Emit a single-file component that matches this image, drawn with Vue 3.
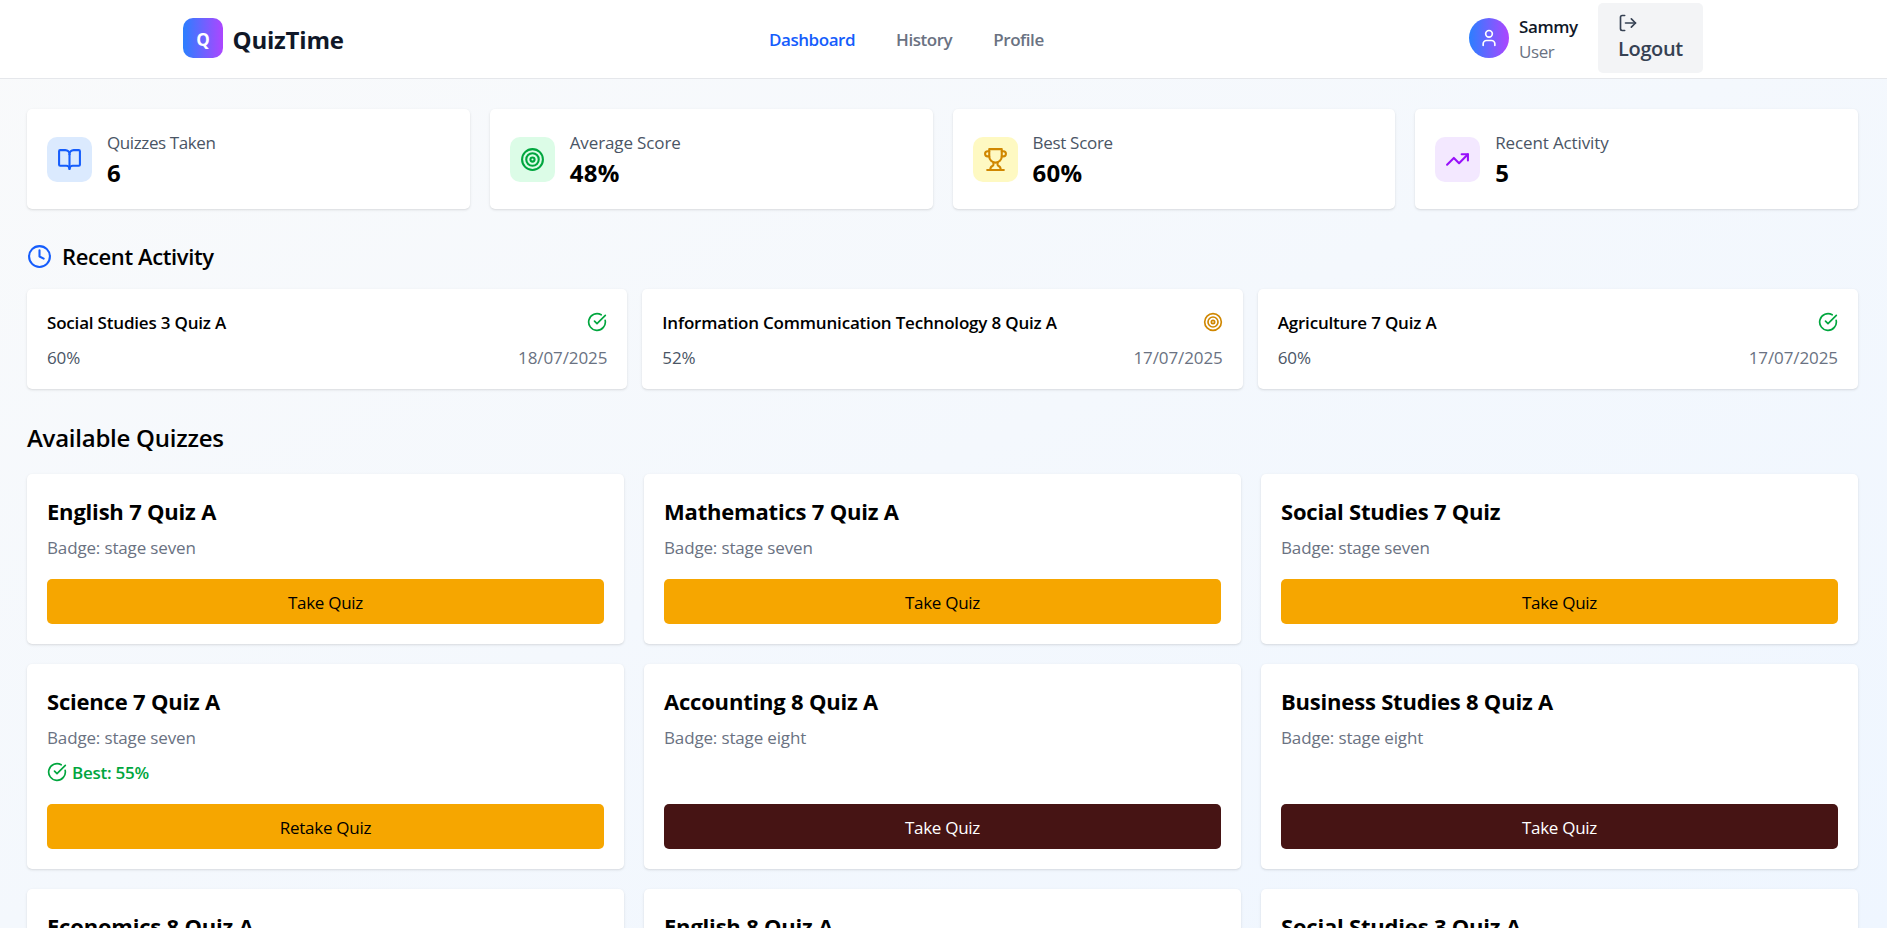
<script setup>
const icons = {
  book: ['M12 7v14', 'M3 18a1 1 0 0 1-1-1V4a1 1 0 0 1 1-1h5a4 4 0 0 1 4 4 4 4 0 0 1 4-4h5a1 1 0 0 1 1 1v13a1 1 0 0 1-1 1h-6a3 3 0 0 0-3 3 3 3 0 0 0-3-3z'],
  target: ['M2 12a10 10 0 1 0 20 0a10 10 0 1 0-20 0', 'M6 12a6 6 0 1 0 12 0a6 6 0 1 0-12 0', 'M10 12a2 2 0 1 0 4 0a2 2 0 1 0-4 0'],
  trophy: ['M6 9H4.5a2.5 2.5 0 0 1 0-5H6', 'M18 9h1.5a2.5 2.5 0 0 0 0-5H18', 'M4 22h16', 'M10 14.66V17c0 .55-.47.98-.97 1.21C7.85 18.75 7 20.24 7 22', 'M14 14.66V17c0 .55.47.98.97 1.21C16.15 18.75 17 20.24 17 22', 'M18 2H6v7a6 6 0 0 0 12 0V2Z'],
  trend: ['M22 7 13.5 15.5 8.5 10.5 2 17', 'M16 7h6v6'],
  check: ['M21.801 10A10 10 0 1 1 17 3.335', 'm9 11 3 3L22 4'],
}
const stats = [
  { label: 'Quizzes Taken', value: '6', icon: 'book', tone: 'blue' },
  { label: 'Average Score', value: '48%', icon: 'target', tone: 'green' },
  { label: 'Best Score', value: '60%', icon: 'trophy', tone: 'yellow' },
  { label: 'Recent Activity', value: '5', icon: 'trend', tone: 'purple' },
]
const recent = [
  { title: 'Social Studies 3 Quiz A', score: '60%', date: '18/07/2025', icon: 'check', tone: 'pass' },
  { title: 'Information Communication Technology 8 Quiz A', score: '52%', date: '17/07/2025', icon: 'target', tone: 'fair' },
  { title: 'Agriculture 7 Quiz A', score: '60%', date: '17/07/2025', icon: 'check', tone: 'pass' },
]
const quizzes = [
  { title: 'English 7 Quiz A', stage: 'seven' },
  { title: 'Mathematics 7 Quiz A', stage: 'seven' },
  { title: 'Social Studies 7 Quiz', stage: 'seven' },
  { title: 'Science 7 Quiz A', stage: 'seven', best: '55%' },
  { title: 'Accounting 8 Quiz A', stage: 'eight' },
  { title: 'Business Studies 8 Quiz A', stage: 'eight' },
  { title: 'Economics 8 Quiz A', stage: 'eight' },
  { title: 'English 8 Quiz A', stage: 'eight' },
  { title: 'Social Studies 3 Quiz A', stage: 'three' },
]
</script>

<template>
  <div class="page">
    <header class="header">
      <div class="brand">
        <span class="mark">Q</span>
        <span class="name">QuizTime</span>
      </div>
      <nav class="nav">
        <a class="active">Dashboard</a>
        <a>History</a>
        <a>Profile</a>
      </nav>
      <div class="account">
        <span class="avatar">
          <svg class="icon" viewBox="0 0 24 24"><path d="M19 21v-2a4 4 0 0 0-4-4H9a4 4 0 0 0-4 4v2" /><circle cx="12" cy="7" r="4" /></svg>
        </span>
        <div class="who">
          <span class="user">Sammy</span>
          <span class="role">User</span>
        </div>
        <button class="logout">
          <svg class="icon" viewBox="0 0 24 24"><path d="M8 3H5a2 2 0 0 0-2 2v14a2 2 0 0 0 2 2h3" /><path d="m16 17 5-5-5-5" /><path d="M21 12H9" /></svg>
          <span>Logout</span>
        </button>
      </div>
    </header>

    <main class="main">
      <section class="stats">
        <article v-for="s in stats" :key="s.label" class="card stat">
          <span class="tile" :class="s.tone">
            <svg class="icon" viewBox="0 0 24 24"><path v-for="d in icons[s.icon]" :key="d" :d="d" /></svg>
          </span>
          <div>
            <p class="label">{{ s.label }}</p>
            <p class="value">{{ s.value }}</p>
          </div>
        </article>
      </section>

      <h2 class="heading">
        <svg class="icon" viewBox="0 0 24 24"><circle cx="12" cy="12" r="10" /><path d="M12 6v6l4 2" /></svg>
        <span>Recent Activity</span>
      </h2>
      <section class="recent">
        <article v-for="(r, i) in recent" :key="i" class="card">
          <div class="row">
            <h3 class="recent-title">{{ r.title }}</h3>
            <svg class="icon small" :class="r.tone" viewBox="0 0 24 24"><path v-for="d in icons[r.icon]" :key="d" :d="d" /></svg>
          </div>
          <div class="row meta">
            <span class="score">{{ r.score }}</span>
            <span class="date">{{ r.date }}</span>
          </div>
        </article>
      </section>

      <h2 class="available">Available Quizzes</h2>
      <section class="quizzes">
        <article v-for="(q, i) in quizzes" :key="i" class="card quiz">
          <h3 class="quiz-title">{{ q.title }}</h3>
          <p class="badge">Badge: stage {{ q.stage }}</p>
          <p v-if="q.best" class="best">
            <svg class="icon small" viewBox="0 0 24 24"><path v-for="d in icons.check" :key="d" :d="d" /></svg>
            <span>Best: {{ q.best }}</span>
          </p>
          <button class="take" :class="q.stage">{{ q.best ? 'Retake Quiz' : 'Take Quiz' }}</button>
        </article>
      </section>
    </main>
  </div>
</template>

<style>
body { margin: 0; }
</style>

<style scoped>
.page {
  height: 928px;
  overflow: hidden;
  box-sizing: border-box;
  font-family: "Segoe UI", "Open Sans", "Noto Sans", sans-serif;
  font-size: 17px;
  line-height: 25px;
  color: #000;
  background: linear-gradient(to bottom right, #f9fafb, #eff6ff);
}
p, h2, h3 { margin: 0; font-weight: 400; }
button { border: 0; font: inherit; }
.icon { display: block; flex: none; width: 25px; height: 25px; fill: none; stroke: currentColor; stroke-width: 2; stroke-linecap: round; stroke-linejoin: round; }
.icon.small { width: 20px; height: 20px; }

.header {
  display: grid;
  grid-template-columns: 586px 1fr auto;
  align-items: center;
  box-sizing: border-box;
  height: 79px;
  padding: 0 184px 2px 183px;
  background: #fff;
  border-bottom: 1px solid #e5e7eb;
}
.brand, .nav, .account { display: flex; align-items: center; }
.brand { gap: 9.5px; }
.mark, .avatar { display: flex; align-items: center; justify-content: center; width: 40px; height: 40px; color: #fff; background: linear-gradient(to right, #2b7fff, #ad46ff); }
.mark { border-radius: 10px; font-size: 17px; font-weight: 700; padding-top: 2px; height: 38px; }
.name { font-size: 24px; font-weight: 700; line-height: 35px; color: #101828; padding-top: 3px; letter-spacing: -0.2px; }
.nav { gap: 41px; font-weight: 600; color: #6a7282; padding-top: 2px; letter-spacing: -0.45px; }
.nav .active { color: #155dfc; }
.avatar { border-radius: 50%; }
.avatar .icon { width: 20px; height: 20px; }
.who { display: flex; flex-direction: column; width: 69px; margin: 2px 0 0 10px; letter-spacing: -0.4px; }
.user { font-weight: 600; color: #101828; }
.role { color: #6a7282; }
.logout { display: flex; flex-direction: column; align-items: flex-start; margin-left: 10px; box-sizing: border-box; width: 105px; height: 70px; padding: 10px 20px 0; border-radius: 5px; background: #f3f4f6; color: #364153; font-size: 20px; font-weight: 600; line-height: 32px; letter-spacing: -0.35px; }
.logout .icon { width: 20px; height: 20px; }

.main { padding: 30px 29px 0 27px; }
.card { box-sizing: border-box; padding: 20px; background: #fff; border-radius: 5px; box-shadow: 0 1px 3px rgba(0, 0, 0, .1), 0 1px 2px -1px rgba(0, 0, 0, .1); }
.stats { display: grid; grid-template-columns: repeat(4, 1fr); gap: 20px; }
.stat { display: flex; align-items: center; gap: 15px; height: 100px; }
.tile { padding: 10px; border-radius: 10px; }
.blue { color: #155dfc; background: #dbeafe; }
.green { color: #00a63e; background: #dcfce7; }
.yellow { color: #d08700; background: #fef9c2; }
.purple { color: #9810fa; background: #f3e8ff; }
.label { height: 25px; line-height: 27px; color: #4a5565; letter-spacing: -0.13px; }
.blue + div .label { letter-spacing: -0.4px; }
.yellow + div .label { letter-spacing: -0.3px; }
.value { height: 35px; line-height: 37px; font-size: 24px; font-weight: 700; letter-spacing: 0.3px; }

.heading { display: flex; align-items: center; gap: 10px; height: 35px; margin: 30px 0 15px; font-size: 22px; font-weight: 600; letter-spacing: -0.38px; }
.heading .icon { color: #155dfc; }
.recent { display: grid; grid-template-columns: repeat(3, 1fr); gap: 15px; }
.row { display: flex; align-items: center; justify-content: space-between; height: 25px; line-height: 27px; }
.recent-title { height: 25px; font-size: 17px; font-weight: 600; letter-spacing: -0.19px; }
.meta { margin-top: 10px; letter-spacing: -0.1px; }
.meta span { height: 25px; }
.score { color: #4a5565; }
.date { color: #6a7282; }
.pass { color: #00a63e; }
.fair { color: #d08700; }

.available { height: 35px; margin: 30px 0 20px; font-size: 24px; line-height: 37px; font-weight: 600; letter-spacing: -0.25px; }
.quizzes { display: grid; grid-template-columns: repeat(3, 1fr); gap: 20px; }
.quiz { display: flex; flex-direction: column; min-height: 170px; }
.quiz-title { font-size: 22px; line-height: 35px; font-weight: 700; letter-spacing: -0.2px; }
.badge { height: 25px; margin-top: 5px; line-height: 27px; color: #6a7282; letter-spacing: -0.15px; }
.best { display: flex; align-items: center; gap: 5px; height: 25px; margin-top: 10px; line-height: 27px; font-weight: 600; color: #00a63e; letter-spacing: -0.25px; }
.best span { height: 25px; }
.take { flex: none; width: 100%; height: 45px; margin-top: auto; padding: 1px 0 0; border-radius: 5px; letter-spacing: -0.28px; }
.take.seven { background: #f6a600; color: #000; }
.take.eight, .take.three { background: #461414; color: #fff; }
.best + .take { margin-top: 20px; }
</style>
